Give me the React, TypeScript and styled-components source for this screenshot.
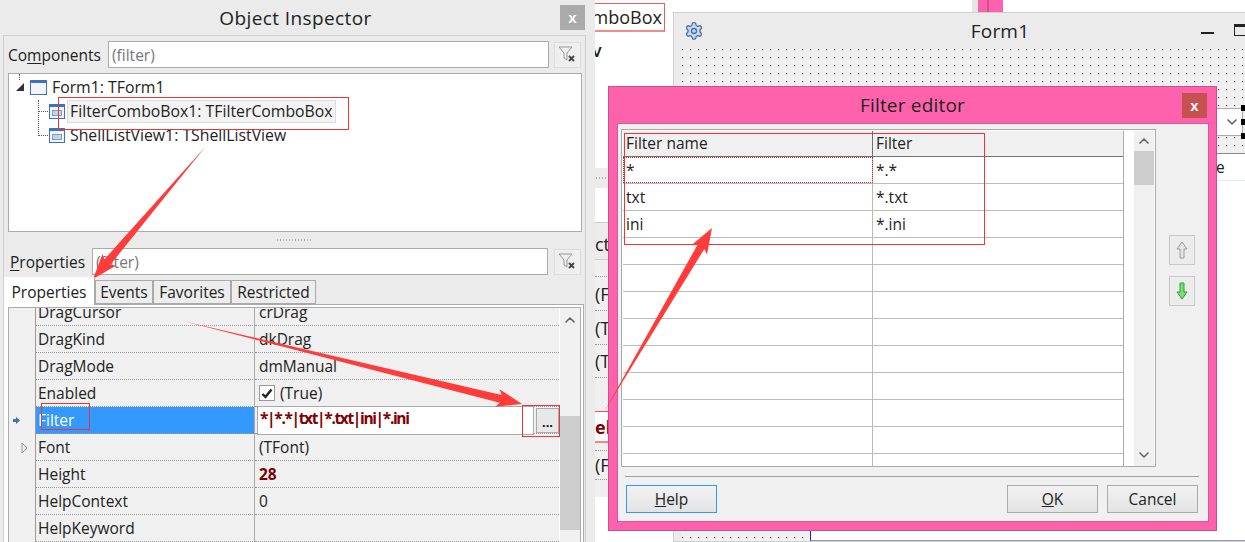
import React from 'react';
import styled, { createGlobalStyle } from 'styled-components';
import { ChevronDown, ChevronUp, Settings } from 'lucide-react';

const GlobalStyle = createGlobalStyle`
  * {
    box-sizing: border-box;
  }
  body {
    margin: 0;
    background: #fff;
    font-family: "Open Sans", "Noto Sans", sans-serif;
    font-size: 15.5px;
    color: #222;
  }
`;

const Page = styled.div`
  position: relative;
  display: flex;
  width: 1245px;
  height: 542px;
  overflow: hidden;
  background: #fff;
`;

/* ---------- Object inspector ---------- */

const Inspector = styled.section`
  display: flex;
  flex: none;
  flex-direction: column;
  width: 595px;
  height: 542px;
  background: #ebebeb;
`;

const WindowTitle = styled.span`
  grid-column: 2;
  font-size: 19px;
  letter-spacing: 0.2px;
`;

const InspectorHeading = styled(WindowTitle)`
  margin-right: 4px;
  letter-spacing: 0.4px;
`;

const InspectorTitle = styled.header`
  display: grid;
  grid-template-columns: 1fr auto 1fr;
  align-items: center;
  height: 35px;
  flex: none;
  padding: 0 10px;
`;

const CloseButton = styled.button<{ $bg: string }>`
  grid-column: 3;
  justify-self: end;
  width: 25px;
  height: 25px;
  padding: 0;
  border: 0;
  background: ${(p) => p.$bg};
  color: #fff;
  font: bold 15px "Liberation Sans", sans-serif;
`;

const InspectorBody = styled.div`
  display: flex;
  flex-direction: column;
  flex: 1;
  width: 583px;
  margin-left: 3px;
  border: 1px solid #d0d0d0;
  border-bottom: 0;
  min-height: 0;
`;

const FilterRow = styled.div<{ $top: number }>`
  display: flex;
  flex: none;
  align-items: center;
  height: 27px;
  margin-top: ${(p) => p.$top}px;
  padding-left: 4px;
`;

const FilterLabel = styled.label<{ $width: number; $indent?: number }>`
  width: ${(p) => p.$width}px;
  flex: none;
  padding-left: ${(p) => p.$indent ?? 0}px;
  u {
    text-underline-offset: 2px;
  }
`;

const FilterInput = styled.div<{ $width: number }>`
  display: flex;
  align-items: center;
  width: ${(p) => p.$width}px;
  height: 27px;
  padding-left: 3px;
  border: 1px solid #aaa;
  background: #fff;
  color: #777;
`;

const ClearButton = styled.div`
  display: flex;
  align-items: center;
  justify-content: center;
  width: 27px;
  height: 26px;
  margin-left: auto;
  margin-right: 4px;
  border: 1px solid #ddd;
  background: #efefef;
`;

const Tree = styled.div`
  position: relative;
  flex: none;
  height: 159px;
  margin: 5px 3px 0 4px;
  border: 1px solid #aaa;
  background: #fff;
`;

const TreeRow = styled.div<{ $indent: number }>`
  position: relative;
  display: flex;
  align-items: center;
  gap: 3px;
  height: 24px;
  padding-left: ${(p) => p.$indent}px;
  &:first-of-type {
    margin-top: 1px;
  }
`;

const TreeLabel = styled.span<{ $focused?: boolean }>`
  display: inline-flex;
  align-items: center;
  height: 23px;
  padding: 0 2px;
  margin-left: -1px;
  border: 1px solid ${(p) => (p.$focused ? '#dcdcdc' : 'transparent')};
  background: ${(p) => (p.$focused ? '#f3f3f3' : 'transparent')};
  font-size: 15.8px;
  white-space: nowrap;
`;

const TreeBranch = styled.i<{ $height: number }>`
  position: absolute;
  left: 29px;
  bottom: 11px;
  width: 10px;
  height: ${(p) => p.$height}px;
  border-left: 1px dotted #555;
  border-bottom: 1px dotted #555;
`;

const TreeStem = styled.i`
  position: absolute;
  left: 10px;
  top: 0;
  height: 6px;
  border-left: 1px dotted #555;
`;

const ExpandedSvg = styled.svg`
  margin-right: 2px;
`;

const Splitter = styled.div`
  display: flex;
  flex: none;
  align-items: center;
  justify-content: center;
  height: 16px;
  &::before {
    content: '';
    width: 36px;
    height: 2px;
    background: repeating-linear-gradient(90deg, #b5b5b5 0 1px, transparent 1px 3px);
  }
`;

const Tabs = styled.div`
  display: flex;
  flex: none;
  align-items: flex-end;
  height: 27px;
  margin-top: 2px;
  position: relative;
  z-index: 1;
`;

const Tab = styled.div<{ $active?: boolean; $width: number }>`
  display: flex;
  align-items: center;
  justify-content: center;
  width: ${(p) => p.$width}px;
  height: ${(p) => (p.$active ? 28 : 24)}px;
  margin-bottom: ${(p) => (p.$active ? -1 : 0)}px;
  border: 1px solid #aaa;
  border-bottom: ${(p) => (p.$active ? '0' : '1px solid #aaa')};
  border-left: ${(p) => (p.$active ? '0' : '1px solid #aaa')};
  background: ${(p) => (p.$active ? '#fff' : '#ededed')};
  border-top-color: ${(p) => (p.$active ? '#fff' : '#aaa')};
`;

const TabSheet = styled.div`
  flex: 1;
  min-height: 0;
  width: 580px;
  padding: 2px 2px 0 4px;
  border-top: 1px solid #aaa;
  border-right: 1px solid #aaa;
  background: #fff;
`;

const PropertyGrid = styled.div`
  display: flex;
  height: 100%;
  border: 1px solid #aaa;
  border-bottom: 0;
  background: #f0f0f0;
  overflow: hidden;
`;

const PropertyRows = styled.div`
  flex: none;
  width: 551px;
  margin-top: -9px;
  border-right: 1px solid #fff;
`;

const PropertyRow = styled.div`
  display: grid;
  grid-template-columns: 27px 219px 304px;
  grid-template-rows: 27px;
  height: 27px;
`;

const Gutter = styled.div`
  display: flex;
  align-items: center;
  justify-content: flex-end;
  padding-right: 7px;
  border-right: 1px solid #9a9a9a;
`;

const CurrentSvg = styled.svg`
  margin-right: 8px;
`;

const NameCell = styled.div<{ $selected?: boolean }>`
  display: flex;
  align-items: center;
  padding-left: 2px;
  border-right: 1px solid #aaa;
  border-bottom: 1px dotted #999;
  background: ${(p) => (p.$selected ? '#3399ff' : 'transparent')};
  color: ${(p) => (p.$selected ? '#fff' : '#222')};
`;

const ValueCell = styled.div<{ $bold?: boolean }>`
  position: relative;
  display: flex;
  align-items: center;
  gap: 5px;
  padding-left: 4px;
  border-bottom: 1px dotted #999;
  font-weight: ${(p) => (p.$bold ? 700 : 400)};
  color: ${(p) => (p.$bold ? '#800000' : '#222')};
`;

const EditorBox = styled.div`
  display: flex;
  flex: none;
  align-items: center;
  width: 277px;
  height: 29px;
  margin-left: -2px;
  padding: 0 0 4px 2px;
  border: 1px solid #aaa;
  background: #fff;
  letter-spacing: -1.35px;
`;

const EllipsisButton = styled.div`
  display: flex;
  align-items: flex-end;
  justify-content: center;
  width: 24px;
  height: 25px;
  margin-left: -3px;
  padding-bottom: 3px;
  border: 1px solid #aaa;
  background: #e8e8e8;
  color: #111;
  font: bold 13px/1 "Liberation Sans", sans-serif;
`;

const CheckMark = styled.span`
  display: flex;
  align-items: center;
  justify-content: center;
  width: 16px;
  height: 16px;
  border: 1px solid #999;
  background: #fff;
`;

const ScrollTrack = styled.div<{ $width: number }>`
  display: flex;
  flex: none;
  flex-direction: column;
  align-items: center;
  width: ${(p) => p.$width}px;
  background: #f0f0f0;
  color: #666;
`;

const ScrollUp = styled(ChevronUp)<{ $top: number }>`
  flex: none;
  margin-top: ${(p) => p.$top}px;
`;

const ScrollDown = styled(ChevronDown)`
  flex: none;
  margin-top: auto;
  margin-bottom: 3px;
`;

const ScrollThumb = styled.div<{ $top: number; $height: number }>`
  flex: none;
  align-self: stretch;
  margin-top: ${(p) => p.$top}px;
  height: ${(p) => p.$height}px;
  background: #cdcdcd;
`;

/* ---------- stuff behind the dialog ---------- */

const Desk = styled.div`
  position: relative;
  flex: 1;
  height: 542px;
`;

const BehindStrip = styled.div`
  position: absolute;
  left: 383px;
  top: 0;
  width: 25px;
  height: 12px;
  background: linear-gradient(90deg, #ff62ad 0 9px, #c9558f 9px 11px, #ff62ad 11px);
  box-shadow: -6px 0 0 #e6e6e6;
`;

const BackPanel = styled.div`
  position: absolute;
  left: 0;
  top: 0;
  display: flex;
  flex-direction: column;
  width: 78px;
  overflow: hidden;
  font-size: 18px;
`;

const ClippedTitle = styled.div`
  display: flex;
  align-items: center;
  justify-content: flex-end;
  width: 70px;
  height: 29px;
  margin-top: 3px;
  border: 1px solid #f05a5a;
  border-bottom: 2px solid #f58a8a;
  border-left: 0;
  padding-right: 2px;
  white-space: nowrap;
  overflow: hidden;
`;

const ClippedTail = styled.div`
  height: 136px;
  padding-top: 6px;
  line-height: 24px;
  text-indent: -3px;
  font-weight: 600;
`;

const BackBand = styled.div<{ $height: number; $bg?: string; $line?: string }>`
  display: flex;
  align-items: center;
  height: ${(p) => p.$height}px;
  background: ${(p) => p.$bg ?? '#f0f0f0'};
  border-bottom: 1px ${(p) => p.$line ?? 'dotted #999'};
  white-space: nowrap;
  overflow: hidden;
`;

const SplitterBand = styled(BackBand)`
  &::before {
    content: '';
    width: 12px;
    margin-left: 1px;
    height: 2px;
    background: repeating-linear-gradient(90deg, #b5b5b5 0 1px, transparent 1px 3px);
  }
`;

const TabBand = styled(BackBand)`
  align-items: flex-end;
  padding-bottom: 3px;
  border-top: 1px solid #ccc;
`;

const MarkedBand = styled.div`
  display: flex;
  align-items: center;
  height: 32px;
  border-top: 1px solid #ff4a4a;
  border-bottom: 2px solid #ff8080;
  background: #fff;
  overflow: hidden;
  white-space: nowrap;
`;

const BoldRed = styled.span`
  color: #800000;
  font-weight: 700;
`;

const FormWindow = styled.div`
  position: absolute;
  left: 78px;
  top: 12px;
  display: flex;
  flex-direction: column;
  width: 644px;
  height: 530px;
  border: 1px solid #d0d0d0;
  background: #ebebeb;
`;

const FormTitle = styled.header`
  display: grid;
  grid-template-columns: 1fr auto 1fr;
  align-items: center;
  flex: none;
  height: 36px;
  padding-left: 10px;
`;

const FormTitleText = styled.span`
  font-size: 19px;
  letter-spacing: 0.2px;
`;

const WindowButtons = styled.div`
  display: flex;
  align-items: center;
  justify-self: end;
  gap: 20px;
  padding-right: 66px;
`;

const MinimizeGlyph = styled.i`
  width: 13px;
  height: 2px;
  margin-top: 4px;
  background: #222;
`;

const MaximizeGlyph = styled.i`
  width: 16px;
  height: 12px;
  margin-top: -2px;
  border: 1px solid #222;
  border-top-width: 3px;
`;

const FormCanvas = styled.div`
  position: relative;
  flex: 1;
  margin-left: 7px;
  background-color: #f0f0f0;
  background-image: radial-gradient(circle at 0.5px 0.5px, #222 0.5px, transparent 0.6px);
  background-size: 8px 8px;
  background-position: 1px 0;
`;

const DesignCombo = styled.div`
  position: absolute;
  left: 129px;
  top: 59px;
  display: flex;
  align-items: center;
  justify-content: flex-end;
  width: 433px;
  height: 28px;
  padding-right: 2px;
  border: 1px solid #aaa;
  background: #fff;
  color: #666;
`;

const Handle = styled.i<{ $top: number }>`
  position: absolute;
  left: 560px;
  top: ${(p) => p.$top}px;
  width: 6px;
  height: 6px;
  background: #000;
`;

const DesignList = styled.div`
  position: absolute;
  left: 129px;
  top: 104px;
  width: 530px;
  height: 388px;
  border-top: 1px solid #888;
  border-bottom: 1px solid #99a;
  border-left: 1px solid #2020e0;
  background: #fff;
`;

const ListHeader = styled.div`
  display: flex;
  align-items: center;
  height: 27px;
  padding-left: 405px;
  border-bottom: 1px solid #e3edf7;
`;

/* ---------- Filter editor dialog ---------- */

const Dialog = styled.div`
  position: absolute;
  left: 13px;
  top: 86px;
  display: flex;
  flex-direction: column;
  width: 609px;
  height: 445px;
  border: 1px solid #c94f8e;
  background: #ff62ad;
`;

const DialogTitle = styled.header`
  display: grid;
  grid-template-columns: 1fr auto 1fr;
  align-items: center;
  flex: none;
  height: 36px;
  padding: 0 9px;
`;

const DialogBody = styled.div`
  display: flex;
  flex: 1;
  flex-direction: column;
  margin: 0 7px 8px 8px;
  padding: 5px 0 0 3px;
  border: 1px solid #d05a98;
  background: #f0f0f0;
`;

const EditorRow = styled.div`
  display: flex;
  flex: none;
  height: 338px;
`;

const FilterGrid = styled.div`
  display: flex;
  width: 535px;
  padding: 1px 2px 0 1px;
  border: 1px solid #aaa;
  background: #fff;
  overflow: hidden;
`;

const FilterTable = styled.div`
  flex: none;
  width: 501px;
  margin-right: 10px;
  border-right: 1px solid #aaa;
`;

const HeaderRow = styled.div`
  display: grid;
  grid-template-columns: 250px 250px;
  height: 26px;
  background: #f0f0f0;
  border-bottom: 1px solid #707070;
`;

const HeaderCell = styled.div`
  display: flex;
  align-items: center;
  padding: 0 0 1px 3px;
  border-right: 1px solid #707070;
  &:last-child {
    border-right: 0;
  }
`;

const DataRow = styled.div`
  display: grid;
  grid-template-columns: 250px 250px;
  height: 27px;
  border-bottom: 1px solid #bbb;
`;

const DataCell = styled.div<{ $focused?: boolean }>`
  display: flex;
  align-items: center;
  padding-left: 3px;
  border-right: 1px solid #bbb;
  outline: ${(p) => (p.$focused ? '1px dotted #e02020' : 'none')};
  outline-offset: -1px;
  &:last-child {
    border-right: 0;
  }
`;

const MoveButtons = styled.div`
  display: flex;
  flex-direction: column;
  gap: 11px;
  margin: 106px 0 0 13px;
`;

const MoveButton = styled.div`
  display: flex;
  align-items: center;
  justify-content: center;
  width: 26px;
  height: 30px;
  border: 1px solid #c8c8c8;
  background: #ececec;
`;

const MoveSvg = styled.svg<{ $down?: boolean }>`
  transform: ${(p) => (p.$down ? 'rotate(180deg)' : 'none')};
`;

const Divider = styled.hr`
  flex: none;
  width: 574px;
  height: 1px;
  margin: 9px 0 0 4px;
  border: 0;
  background: #a0a0a0;
`;

const DialogActions = styled.div`
  display: flex;
  flex: none;
  gap: 9px;
  margin: 8px 0 0 5px;
  width: 572px;
`;

const DialogButton = styled.button<{ $primary?: boolean; $push?: boolean }>`
  width: 91px;
  height: 28px;
  margin-left: ${(p) => (p.$push ? 'auto' : '0')};
  border: 1px solid ${(p) => (p.$primary ? '#3399ff' : '#aaa')};
  background: linear-gradient(#f2f2f2, #e3e3e3);
  color: #222;
  font: 15.5px "Open Sans", "Noto Sans", sans-serif;
  padding: 0;
`;

/* ---------- hand drawn annotations ---------- */

const Notes = styled.svg`
  position: absolute;
  left: 0;
  top: 0;
  pointer-events: none;
`;

const Callout = styled.div<{ $x: number; $y: number; $w: number; $h: number }>`
  position: absolute;
  left: ${(p) => p.$x}px;
  top: ${(p) => p.$y}px;
  width: ${(p) => p.$w}px;
  height: ${(p) => p.$h}px;
  border: 1px solid #ee3535;
  pointer-events: none;
`;

function arrowPoints(x1: number, y1: number, x2: number, y2: number, shaft: number, head: number, len: number) {
  const dist = Math.hypot(x2 - x1, y2 - y1);
  const ux = (x2 - x1) / dist;
  const uy = (y2 - y1) / dist;
  const nx = -uy;
  const ny = ux;
  const bx = x2 - ux * len;
  const by = y2 - uy * len;
  const wing = len * 1.15;
  const wx = x2 - ux * wing;
  const wy = y2 - uy * wing;
  const pts = [
    [x1, y1],
    [bx + nx * shaft, by + ny * shaft],
    [wx + nx * head, wy + ny * head],
    [x2, y2],
    [wx - nx * head, wy - ny * head],
    [bx - nx * shaft, by - ny * shaft],
  ];
  return pts.map((p) => p.map((n) => n.toFixed(1)).join(',')).join(' ');
}

/* ---------- small drawings ---------- */

function FormIcon() {
  return (
    <svg width="17" height="15" viewBox="0 0 17 15">
      <rect x="0.5" y="0.5" width="16" height="14" fill="#f4f4f4" stroke="#3b73c4" />
      <rect x="0" y="0" width="17" height="3" fill="#3b73c4" />
    </svg>
  );
}

function ComponentIcon() {
  return (
    <svg width="16" height="15" viewBox="0 0 16 15">
      <rect x="0.5" y="0.5" width="15" height="14" fill="#f4f4f4" stroke="#3b73c4" />
      <rect x="0" y="0" width="16" height="3" fill="#3b73c4" />
      <rect x="3.5" y="6.5" width="9" height="5" fill="#c5d3ea" stroke="#7f9bc8" />
    </svg>
  );
}

function FunnelClear() {
  return (
    <svg width="20" height="17" viewBox="0 0 20 17">
      <path d="M1 1h13l-5 6v7l-3-2V7z" fill="#eee" stroke="#999" />
      <path d="M11 10l5 5M16 10l-5 5" stroke="#444" strokeWidth="1.8" />
    </svg>
  );
}

function ExpandedMark() {
  return (
    <ExpandedSvg width="9" height="9" viewBox="0 0 9 9">
      <path d="M8 0v8H0z" fill="#333" />
    </ExpandedSvg>
  );
}

function CurrentMark() {
  return (
    <CurrentSvg width="7" height="7" viewBox="0 0 7 7">
      <path d="M0 2h3V0l4 3.500-4 3.500V5H0z" fill="#3b73c4" />
    </CurrentSvg>
  );
}

function CollapsedMark() {
  return (
    <svg width="7" height="12" viewBox="0 0 7 12">
      <path d="M1 1l5 5-5 5z" fill="#f0f0f0" stroke="#999" />
    </svg>
  );
}

function TickMark() {
  return (
    <svg width="12" height="11" viewBox="0 0 12 11">
      <path d="M1.500 6l3 3 6-7.500" fill="none" stroke="#222" strokeWidth="2.400" />
    </svg>
  );
}

function MoveArrow({ down }: { down?: boolean }) {
  return (
    <MoveSvg $down={down} width="12" height="18" viewBox="0 0 12 18">
      <path
        d="M6 1L1 8h3v9h4V8h3z"
        fill={down ? '#77dd77' : '#e4e4e4'}
        stroke={down ? '#2f9e3f' : '#9a9a9a'}
      />
    </MoveSvg>
  );
}

const properties = [
  { name: 'DragCursor', value: 'crDrag' },
  { name: 'DragKind', value: 'dkDrag' },
  { name: 'DragMode', value: 'dmManual' },
  { name: 'Enabled', value: '(True)', check: true },
  { name: 'Filter', value: '*|*.*|txt|*.txt|ini|*.ini', selected: true, bold: true },
  { name: 'Font', value: '(TFont)', expandable: true },
  { name: 'Height', value: '28', bold: true },
  { name: 'HelpContext', value: '0' },
  { name: 'HelpKeyword', value: '' },
];

const filters = [
  ['*', '*.*'],
  ['txt', '*.txt'],
  ['ini', '*.ini'],
  ['', ''],
  ['', ''],
  ['', ''],
  ['', ''],
  ['', ''],
  ['', ''],
  ['', ''],
  ['', ''],
  ['', ''],
];

export default function App() {
  return (
    <Page>
      <GlobalStyle />
      <Inspector>
        <InspectorTitle>
          <InspectorHeading>Object Inspector</InspectorHeading>
          <CloseButton $bg="#aaaaaa">x</CloseButton>
        </InspectorTitle>
        <InspectorBody>
          <FilterRow $top={5}>
            <FilterLabel $width={100}>
              Co<u>m</u>ponents
            </FilterLabel>
            <FilterInput $width={441}>(filter)</FilterInput>
            <ClearButton>
              <FunnelClear />
            </ClearButton>
          </FilterRow>
          <Tree>
            <TreeStem />
            <TreeRow $indent={7}>
              <ExpandedMark />
              <FormIcon />
              <TreeLabel>Form1: TForm1</TreeLabel>
            </TreeRow>
            <TreeRow $indent={40}>
              <TreeBranch $height={12} />
              <ComponentIcon />
              <TreeLabel $focused>FilterComboBox1: TFilterComboBox</TreeLabel>
            </TreeRow>
            <TreeRow $indent={40}>
              <TreeBranch $height={36} />
              <ComponentIcon />
              <TreeLabel>ShellListView1: TShellListView</TreeLabel>
            </TreeRow>
          </Tree>
          <Splitter />
          <FilterRow $top={0}>
            <FilterLabel $width={84} $indent={2}>
              <u>P</u>roperties
            </FilterLabel>
            <FilterInput $width={456}>(filter)</FilterInput>
            <ClearButton>
              <FunnelClear />
            </ClearButton>
          </FilterRow>
          <Tabs>
            <Tab $active $width={91}>
              Properties
            </Tab>
            <Tab $width={58}>Events</Tab>
            <Tab $width={78}>Favorites</Tab>
            <Tab $width={85}>Restricted</Tab>
          </Tabs>
          <TabSheet>
            <PropertyGrid>
              <PropertyRows>
                {properties.map((row) => (
                  <PropertyRow key={row.name}>
                    <Gutter>
                      {row.selected && <CurrentMark />}
                      {row.expandable && <CollapsedMark />}
                    </Gutter>
                    <NameCell $selected={row.selected}>{row.name}</NameCell>
                    <ValueCell $bold={row.bold}>
                      {row.selected ? (
                        <>
                          <EditorBox>{row.value}</EditorBox>
                          <EllipsisButton>...</EllipsisButton>
                        </>
                      ) : (
                        <>
                          {row.check && (
                            <CheckMark>
                              <TickMark />
                            </CheckMark>
                          )}
                          {row.value}
                        </>
                      )}
                    </ValueCell>
                  </PropertyRow>
                ))}
              </PropertyRows>
              <ScrollTrack $width={20}>
                <ScrollUp $top={4} size={16} strokeWidth={2.5} />
                <ScrollThumb $top={88} $height={114} />
              </ScrollTrack>
            </PropertyGrid>
          </TabSheet>
        </InspectorBody>
      </Inspector>

      <Desk>
        <BehindStrip />
        <BackPanel>
          <ClippedTitle>mboBox</ClippedTitle>
          <ClippedTail>v</ClippedTail>
          <SplitterBand $height={20} $bg="#ebebeb" $line="solid #ebebeb" />
          <BackBand $height={34} $bg="#fff" $line="solid #fff" />
          <TabBand $height={38} $bg="#ececec" $line="solid #ccc">
            ct
          </TabBand>
          <BackBand $height={17} />
          <BackBand $height={34}>(F</BackBand>
          <BackBand $height={34}>(T</BackBand>
          <BackBand $height={33}>(T</BackBand>
          <BackBand $height={33} $line="solid #f0f0f0" />
          <MarkedBand>
            <BoldRed>el</BoldRed>
          </MarkedBand>
          <BackBand $height={8} />
          <BackBand $height={29}>(F</BackBand>
          <BackBand $height={17} $line="solid #f0f0f0" />
        </BackPanel>

        <FormWindow>
          <FormTitle>
            <Settings size={20} color="#54729c" fill="#c6d9f4" strokeWidth={1.6} />
            <FormTitleText>Form1</FormTitleText>
            <WindowButtons>
              <MinimizeGlyph />
              <MaximizeGlyph />
            </WindowButtons>
          </FormTitle>
          <FormCanvas>
            <DesignCombo>
              <ChevronDown size={16} strokeWidth={2.5} />
            </DesignCombo>
            <Handle $top={56} />
            <Handle $top={70} />
            <Handle $top={84} />
            <DesignList>
              <ListHeader>e</ListHeader>
            </DesignList>
          </FormCanvas>
        </FormWindow>

        <Dialog>
          <DialogTitle>
            <WindowTitle>Filter editor</WindowTitle>
            <CloseButton $bg="#c75050">x</CloseButton>
          </DialogTitle>
          <DialogBody>
            <EditorRow>
              <FilterGrid>
                <FilterTable>
                  <HeaderRow>
                    <HeaderCell>Filter name</HeaderCell>
                    <HeaderCell>Filter</HeaderCell>
                  </HeaderRow>
                  {filters.map(([name, mask], i) => (
                    <DataRow key={i}>
                      <DataCell $focused={i === 0}>{name}</DataCell>
                      <DataCell>{mask}</DataCell>
                    </DataRow>
                  ))}
                </FilterTable>
                <ScrollTrack $width={20}>
                  <ScrollUp $top={2} size={16} strokeWidth={2.5} />
                  <ScrollThumb $top={2} $height={34} />
                  <ScrollDown size={16} strokeWidth={2.5} />
                </ScrollTrack>
              </FilterGrid>
              <MoveButtons>
                <MoveButton>
                  <MoveArrow />
                </MoveButton>
                <MoveButton>
                  <MoveArrow down />
                </MoveButton>
              </MoveButtons>
            </EditorRow>
            <Divider />
            <DialogActions>
              <DialogButton $primary>
                <u>H</u>elp
              </DialogButton>
              <DialogButton $push>
                <u>O</u>K
              </DialogButton>
              <DialogButton>Cancel</DialogButton>
            </DialogActions>
          </DialogBody>
        </Dialog>
      </Desk>

      <Callout $x={58} $y={97} $w={291} $h={33} />
      <Callout $x={19} $y={279} $w={64} $h={25} />
      <Callout $x={41} $y={403} $w={49} $h={27} />
      <Callout $x={522} $y={405} $w={38} $h={32} />
      <Callout $x={624} $y={133} $w={361} $h={112} />
      <Notes width="1245" height="542" viewBox="0 0 1245 542">
        <polygon points={arrowPoints(206, 146, 93, 279, 4, 9, 22)} fill="#ff3b3b" />
        <polygon points={arrowPoints(183, 321, 522, 404, 4, 9, 22)} fill="#ff3b3b" />
        <polygon points={arrowPoints(604, 412, 712, 228, 4, 9, 22)} fill="#ff3b3b" />
      </Notes>
    </Page>
  );
}
